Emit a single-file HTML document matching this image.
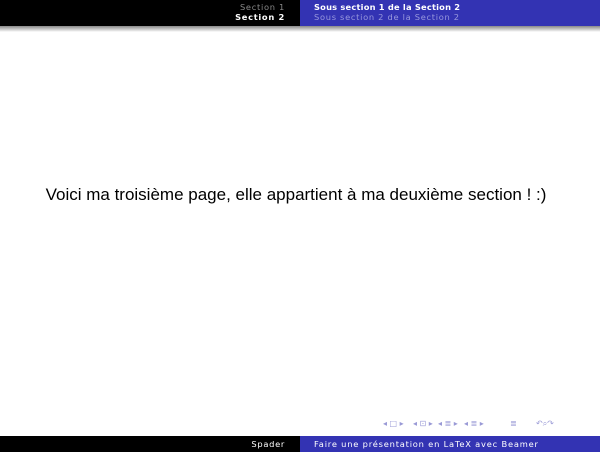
<!DOCTYPE html>
<html><head><style>
body{margin:0;width:600px;height:452px;background:#fff;position:relative;overflow:hidden;font-family:"DejaVu Sans","Liberation Sans",sans-serif;}
.hb{position:absolute;top:0;left:0;width:300px;height:26px;background:#000;}
.hl{position:absolute;top:0;left:300px;width:300px;height:26px;background:#3333b3;}
.sh{position:absolute;top:26px;left:0;width:600px;height:6px;background:linear-gradient(#888,#fff);}
.t{position:absolute;font-size:8.3px;line-height:10px;white-space:nowrap;letter-spacing:0.7px;}
.main{position:absolute;top:185px;left:-4px;width:600px;text-align:center;font-size:17px;color:#000;font-family:"Liberation Sans",sans-serif;}
.fb{position:absolute;top:436px;left:0;width:300px;height:16px;background:#000;}
.fl{position:absolute;top:436px;left:300px;width:300px;height:16px;background:#3333b3;}
.n{position:absolute;top:419px;font-size:8px;color:#9a9ad6;white-space:nowrap;}
</style></head><body>
<div class="hb"></div><div class="hl"></div><div class="sh"></div>
<div class="t" style="right:315px;top:2px;color:#8a8a8a;text-align:right">Section 1</div>
<div class="t" style="right:315px;top:12px;color:#fff;font-weight:bold">Section 2</div>
<div class="t" style="left:314px;top:2px;color:#fff;font-weight:bold;letter-spacing:0.2px">Sous section 1 de la Section 2</div>
<div class="t" style="left:314px;top:12px;color:#9999dd">Sous section 2 de la Section 2</div>
<div class="main">Voici ma troisième page, elle appartient à ma deuxième section ! :)</div>
<div class="n" style="left:383px">◂ □ ▸</div>
<div class="n" style="left:413px">◂ ⊡ ▸</div>
<div class="n" style="left:438px">◂ ≣ ▸</div>
<div class="n" style="left:464px">◂ ≣ ▸</div>
<div class="n" style="left:510px">≣</div>
<div class="n" style="left:536px">↶⌕↷</div>
<div class="fb"></div><div class="fl"></div>
<div class="t" style="right:315px;top:439px;color:#fff">Spader</div>
<div class="t" style="left:314px;top:439px;color:#fff;letter-spacing:0.8px">Faire une présentation en LaTeX avec Beamer</div>
</body></html>
